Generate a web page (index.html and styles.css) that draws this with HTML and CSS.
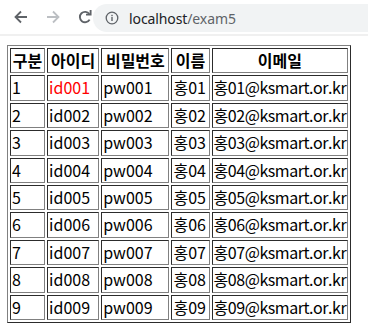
FILE: index.html
```html
<!DOCTYPE html>
<html lang="ko">
<head>
<meta charset="utf-8">
<title>exam5</title>
<link rel="stylesheet" href="styles.css">
</head>
<body>
<div class="toolbar">
  <div class="nav">
    <svg class="ico" width="16" height="16" viewBox="0 0 16 16"><path d="M14 8H2.8M8 2.5L2.5 8L8 13.5" fill="none" stroke="#5f6368" stroke-width="1.8"/></svg>
    <svg class="ico" width="16" height="16" viewBox="0 0 16 16"><path d="M2 8h11.2M8 2.5L13.5 8L8 13.5" fill="none" stroke="#bcbfc3" stroke-width="1.8"/></svg>
    <svg class="ico" width="16" height="16" viewBox="0 0 16 16"><path d="M12.6 10.6A5.2 5.2 0 1 1 12.3 5" fill="none" stroke="#5f6368" stroke-width="1.9"/><path d="M9 5.6h4.6V1" fill="none" stroke="#5f6368" stroke-width="1.9"/></svg>
  </div>
  <div class="omnibox">
    <svg class="info" width="14" height="14" viewBox="0 0 14 14"><circle cx="7" cy="7" r="5.8" fill="none" stroke="#5f6368" stroke-width="1.3"/><rect x="6.3" y="6" width="1.4" height="4" fill="#5f6368"/><rect x="6.3" y="3.8" width="1.4" height="1.4" fill="#5f6368"/></svg>
    <span class="url">localhost<span class="path">/exam5</span></span>
  </div>
</div>
<div class="page">
<table class="tbl">
  <tr><th class="c1">구분</th><th class="c2">아이디</th><th class="c3">비밀번호</th><th class="c4">이름</th><th class="c5">이메일</th></tr>
  <tr><td>1</td><td class="red">id001</td><td>pw001</td><td>홍01</td><td class="mail">홍01@ksmart.or.kr</td></tr>
  <tr><td>2</td><td>id002</td><td>pw002</td><td>홍02</td><td class="mail">홍02@ksmart.or.kr</td></tr>
  <tr><td>3</td><td>id003</td><td>pw003</td><td>홍03</td><td class="mail">홍03@ksmart.or.kr</td></tr>
  <tr><td>4</td><td>id004</td><td>pw004</td><td>홍04</td><td class="mail">홍04@ksmart.or.kr</td></tr>
  <tr><td>5</td><td>id005</td><td>pw005</td><td>홍05</td><td class="mail">홍05@ksmart.or.kr</td></tr>
  <tr><td>6</td><td>id006</td><td>pw006</td><td>홍06</td><td class="mail">홍06@ksmart.or.kr</td></tr>
  <tr><td>7</td><td>id007</td><td>pw007</td><td>홍07</td><td class="mail">홍07@ksmart.or.kr</td></tr>
  <tr><td>8</td><td>id008</td><td>pw008</td><td>홍08</td><td class="mail">홍08@ksmart.or.kr</td></tr>
  <tr><td>9</td><td>id009</td><td>pw009</td><td>홍09</td><td class="mail">홍09@ksmart.or.kr</td></tr>
</table>
</div>
</body>
</html>
```
FILE: styles.css
```css
html, body {
  margin: 0;
  padding: 0;
  background: #fff;
}
.toolbar {
  height: 34px;
  display: flex;
  align-items: center;
  border-bottom: 2px solid #f0f0f0;
  background: #fff;
  overflow: hidden;
}
.nav {
  display: flex;
  align-items: center;
  gap: 16px;
  padding-left: 13px;
  width: 93px;
  box-sizing: border-box;
}
.ico {
  display: block;
}
.omnibox {
  flex: 1;
  height: 28px;
  margin-top: 2px;
  background: #f1f3f4;
  border-radius: 14px 0 0 14px;
  display: flex;
  align-items: center;
  padding-left: 12px;
}
.info {
  display: block;
  margin-right: 10px;
}
.url {
  font-family: "Noto Sans", Roboto, sans-serif;
  font-size: 14px;
  color: #202124;
  letter-spacing: -0.1px;
}
.url .path {
  color: #5f6368;
}
.page {
  padding: 9px 0 0 7px;
}
.tbl {
  border: 1px outset #808080;
  border-spacing: 2px;
  border-collapse: separate;
  font-family: "Noto Sans CJK KR", "Noto Sans", sans-serif;
  font-size: 16px;
  color: #000;
  table-layout: fixed;
  width: 344px;
}
.tbl th, .tbl td {
  border: 1px inset #808080;
  padding: 1px 1px;
  height: 21.4px;
  line-height: 21.4px;
  white-space: nowrap;
  overflow: hidden;
  text-align: left;
}
.tbl th {
  font-weight: bold;
  text-align: center;
}
.tbl td.mail {
  letter-spacing: -0.45px;
}
.c1 { width: 31px; }
.c2 { width: 48px; }
.c3 { width: 64px; }
.c4 { width: 34px; }
.c5 { width: 132px; }
.red {
  color: #ff0000;
}
```
